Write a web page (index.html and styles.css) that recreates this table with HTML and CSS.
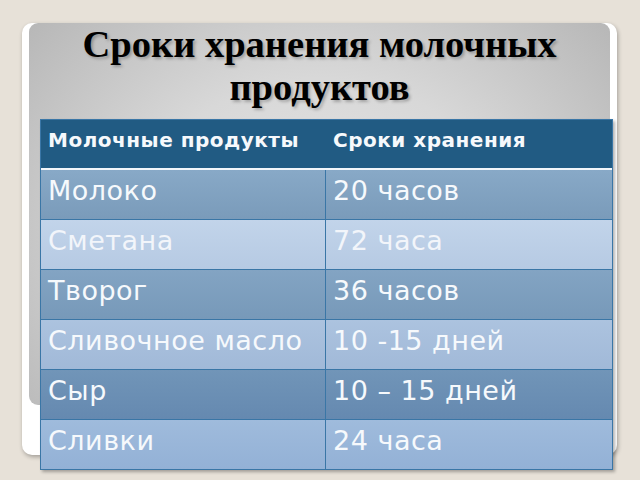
FILE: index.html
```html
<!DOCTYPE html>
<html lang="ru">
<head>
<meta charset="utf-8">
<title>Сроки хранения молочных продуктов</title>
<link rel="stylesheet" href="styles.css">
</head>
<body>
<div class="slide">
  <div class="panel">
    <h1 class="title">Сроки хранения молочных продуктов</h1>
    <div class="table">
      <div class="row head">
        <div class="cell c1">Молочные продукты</div>
        <div class="cell c2">Сроки хранения</div>
      </div>
      <div class="row r1">
        <div class="cell c1">Молоко</div>
        <div class="cell c2">20 часов</div>
      </div>
      <div class="row r2">
        <div class="cell c1">Сметана</div>
        <div class="cell c2">72 часа</div>
      </div>
      <div class="row r3">
        <div class="cell c1">Творог</div>
        <div class="cell c2">36 часов</div>
      </div>
      <div class="row r4">
        <div class="cell c1">Сливочное масло</div>
        <div class="cell c2">10 -15 дней</div>
      </div>
      <div class="row r5">
        <div class="cell c1">Сыр</div>
        <div class="cell c2">10 – 15 дней</div>
      </div>
      <div class="row r6 last">
        <div class="cell c1">Сливки</div>
        <div class="cell c2">24 часа</div>
      </div>
    </div>
  </div>
</div>
</body>
</html>
```
FILE: styles.css
```css
html, body {
  margin: 0;
  padding: 0;
}
body {
  width: 640px;
  height: 480px;
  overflow: hidden;
  background: #e7e1d8;
}
.slide {
  margin: 23px 0 0 22px;
  width: 595px;
  height: 432px;
  box-sizing: border-box;
  padding: 7px 7px 0 7px;
  background: #ffffff;
  border-radius: 10px;
  box-shadow: 1px 2px 4px rgba(0, 0, 0, 0.3);
}
.panel {
  height: 382px;
  box-sizing: border-box;
  padding: 0 0 0 11px;
  border-radius: 9px;
  background: radial-gradient(ellipse 70% 90% at 50% 55%, #e4e4e4 0%, #d8d8d8 45%, #b3b3b3 100%);
}
.title {
  margin: -7px 0 0 -11px;
  padding: 0;
  font-family: "Liberation Serif", "Times New Roman", serif;
  font-weight: bold;
  font-size: 38.5px;
  line-height: 43px;
  text-align: center;
  color: #000;
  text-shadow: 2px 2px 3px rgba(0, 0, 0, 0.25);
}
.table {
  margin-top: 10px;
  width: 573px;
  border: 1px solid #3a76a6;
  box-sizing: border-box;
  box-shadow: 2px 2px 3px rgba(0, 0, 0, 0.3);
  font-family: "DejaVu Sans", Verdana, sans-serif;
  color: #f6f9fc;
}
.row {
  display: flex;
  height: 50px;
  box-sizing: border-box;
  border-bottom: 1px solid #3a76a6;
}
.row.last {
  border-bottom: none;
  height: 49px;
}
.cell {
  box-sizing: border-box;
  padding: 5px 0 0 7px;
  font-size: 27px;
  line-height: 32px;
  letter-spacing: 0.5px;
  white-space: nowrap;
}
.c1 {
  width: 285px;
  border-right: 1px solid #3a76a6;
}
.c2 {
  flex: 1;
}
.row.head {
  height: 50px;
  background: #215b83;
  border-bottom: 2px solid #f2f6fa;
}
.row.head .cell {
  font-size: 20px;
  font-weight: bold;
  line-height: 24px;
  padding-top: 8px;
  letter-spacing: 0.5px;
}
.row.head .c1 {
  border-right: none;
  width: 286px;
}
.row.head .c2 {
  padding-left: 6px;
}
.r1 { background: linear-gradient(#88a9c7, #7a9bba); }
.r2 { background: linear-gradient(#c2d4ea, #b6cae3); color: #f2f5fa; }
.r3 { background: linear-gradient(#83a4c3, #7799b9); }
.r4 { background: linear-gradient(#acc3df, #a1b9d8); }
.r5 { background: linear-gradient(#7195b8, #6589b0); }
.r6 { background: linear-gradient(#9fbbdc, #93b1d6); }
```
